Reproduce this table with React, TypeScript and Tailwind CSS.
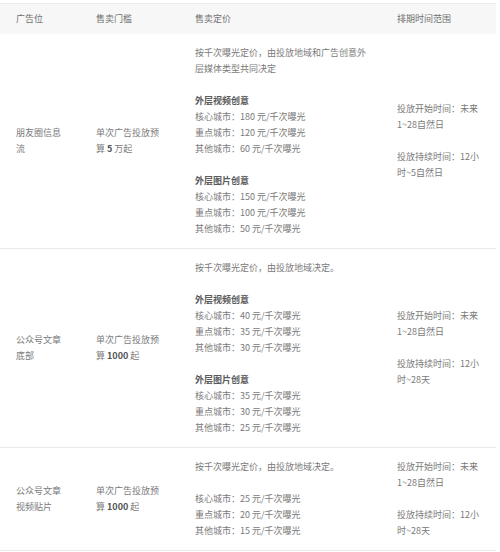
import React from "react";

type Price = { title: string; lines: string[] };
type Row = {
  name: string;
  min: string;
  desc: string;
  groups: Price[];
  dur: string;
};

const rows: Row[] = [
  {
    name: "朋友圈信息流",
    min: "5 万起",
    desc: "按千次曝光定价，由投放地域和广告创意外层媒体类型共同决定",
    groups: [
      {
        title: "外层视频创意",
        lines: ["核心城市：180 元/千次曝光", "重点城市：120 元/千次曝光", "其他城市：60 元/千次曝光"],
      },
      {
        title: "外层图片创意",
        lines: ["核心城市：150 元/千次曝光", "重点城市：100 元/千次曝光", "其他城市：50 元/千次曝光"],
      },
    ],
    dur: "时~5自然日",
  },
  {
    name: "公众号文章底部",
    min: "1000 起",
    desc: "按千次曝光定价，由投放地域决定。",
    groups: [
      {
        title: "外层视频创意",
        lines: ["核心城市：40 元/千次曝光", "重点城市：35 元/千次曝光", "其他城市：30 元/千次曝光"],
      },
      {
        title: "外层图片创意",
        lines: ["核心城市：35 元/千次曝光", "重点城市：30 元/千次曝光", "其他城市：25 元/千次曝光"],
      },
    ],
    dur: "时~28天",
  },
  {
    name: "公众号文章视频贴片",
    min: "1000 起",
    desc: "按千次曝光定价，由投放地域决定。",
    groups: [
      {
        title: "",
        lines: ["核心城市：25 元/千次曝光", "重点城市：20 元/千次曝光", "其他城市：15 元/千次曝光"],
      },
    ],
    dur: "时~28天",
  },
];

const font = {
  fontFamily: '"Noto Sans CJK SC", "Noto Sans", sans-serif',
};

function splitMin(min: string) {
  const i = min.indexOf(" ");
  return [min.slice(0, i), min.slice(i)];
}

export default function App() {
  return (
    <div className="w-[500px] h-[552px] bg-white overflow-hidden" style={font}>
      <div className="w-[496px] mt-[3px] border-t border-[#ececec] text-[9px] leading-[16px] text-[#7a7a7a]">
        <div className="grid grid-cols-[80px_99px_202px_115px] h-[30px] items-center bg-[#f7f7f7] text-[#707070]">
          <div className="pl-4">广告位</div>
          <div className="pl-4">售卖门槛</div>
          <div className="pl-4">售卖定价</div>
          <div className="pl-4">排期时间范围</div>
        </div>
        {rows.map((r, idx) => {
          const [num, rest] = splitMin(r.min);
          return (
            <div
              key={idx}
              className="grid grid-cols-[80px_99px_202px_115px] items-center border-b border-[#e9e9e9] py-[11px]"
            >
              <div className="pl-4 pr-4">{r.name}</div>
              <div className="pl-4 pr-4">
                单次广告投放预算 <b className="font-bold text-[#555]">{num}</b>
                {rest}
              </div>
              <div className="pl-4 pr-3 self-start">
                <div>{r.desc}</div>
                {r.groups.map((g, gi) => (
                  <div key={gi} className="mt-4">
                    {g.title && <div className="font-bold text-[#5a5a5a]">{g.title}</div>}
                    {g.lines.map((l, li) => (
                      <div key={li}>{l}</div>
                    ))}
                  </div>
                ))}
              </div>
              <div className="pl-4 pr-[14px]">
                <div>投放开始时间：未来1~28自然日</div>
                <div className="mt-4">投放持续时间：12小{r.dur}</div>
              </div>
            </div>
          );
        })}
      </div>
    </div>
  );
}
